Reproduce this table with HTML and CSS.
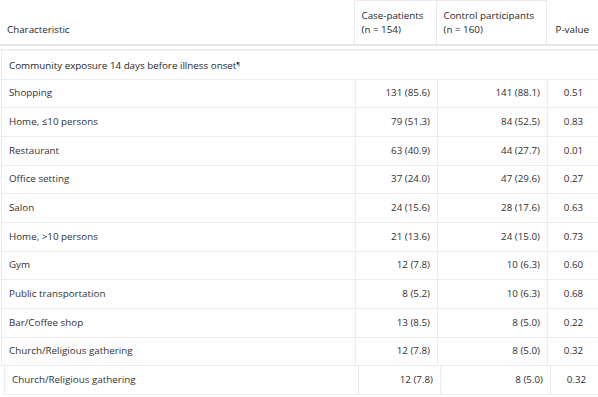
FILE: index.html
```html
<!DOCTYPE html>
<html>
<head>
<meta charset="utf-8">
<link rel="stylesheet" href="styles.css">
</head>
<body>
<div class="page">
  <table class="tbl head">
    <colgroup><col class="c1"><col class="c2"><col class="c3"><col class="c4"></colgroup>
    <tr>
      <th class="first">Characteristic</th>
      <th class="top">Case-patients<br>(n = 154)</th>
      <th class="top">Control participants<br>(n = 160)</th>
      <th class="pv">P-value</th>
    </tr>
  </table>
  <table class="tbl body">
    <colgroup><col class="c1"><col class="c2"><col class="c3"><col class="c4"></colgroup>
    <tr class="section"><td colspan="4">Community exposure 14 days before illness onset<sup>¶</sup></td></tr>
    <tr><td>Shopping</td><td class="num">131 (85.6)</td><td class="num">141 (88.1)</td><td class="p">0.51</td></tr>
    <tr><td>Home, ≤10 persons</td><td class="num">79 (51.3)</td><td class="num">84 (52.5)</td><td class="p">0.83</td></tr>
    <tr><td>Restaurant</td><td class="num">63 (40.9)</td><td class="num">44 (27.7)</td><td class="p">0.01</td></tr>
    <tr><td>Office setting</td><td class="num">37 (24.0)</td><td class="num">47 (29.6)</td><td class="p">0.27</td></tr>
    <tr><td>Salon</td><td class="num">24 (15.6)</td><td class="num">28 (17.6)</td><td class="p">0.63</td></tr>
    <tr><td>Home, &gt;10 persons</td><td class="num">21 (13.6)</td><td class="num">24 (15.0)</td><td class="p">0.73</td></tr>
    <tr><td>Gym</td><td class="num">12 (7.8)</td><td class="num">10 (6.3)</td><td class="p">0.60</td></tr>
    <tr><td>Public transportation</td><td class="num">8 (5.2)</td><td class="num">10 (6.3)</td><td class="p">0.68</td></tr>
    <tr><td>Bar/Coffee shop</td><td class="num">13 (8.5)</td><td class="num">8 (5.0)</td><td class="p">0.22</td></tr>
    <tr><td>Church/Religious gathering</td><td class="num">12 (7.8)</td><td class="num">8 (5.0)</td><td class="p">0.32</td></tr>
  </table>
  <table class="tbl body shifted">
    <colgroup><col class="c1"><col class="c2"><col class="c3"><col class="c4"></colgroup>
    <tr><td>Church/Religious gathering</td><td class="num">12 (7.8)</td><td class="num">8 (5.0)</td><td class="p">0.32</td></tr>
  </table>
</div>
</body>
</html>
```

FILE: styles.css
```css
html, body {
  margin: 0;
  padding: 0;
  background: #ffffff;
}
.page {
  font-family: "Open Sans", "Liberation Sans", sans-serif;
  font-size: 9.8px;
  color: #262626;
  width: 598px;
  overflow: hidden;
}
.tbl {
  border-collapse: collapse;
  table-layout: fixed;
  width: 598px;
}
.c1 { width: 354px; }
.c2 { width: 82px; }
.c3 { width: 110px; }
.c4 { width: 52px; }
.head th {
  font-weight: normal;
  text-align: left;
  vertical-align: bottom;
  height: 36px;
  padding: 0 7px 7px 7px;
  line-height: 14px;
  border-bottom: 2px solid #e3e5e8;
}
.head th.top {
  border-top: 1px solid #e8eaed;
  border-left: 1px solid #e8eaed;
  border-right: 1px solid #e8eaed;
}
.head th.pv {
  text-align: center;
  padding: 0 0 7px 0;
}
.body {
  margin-top: 3px;
  width: 595px;
  margin-left: 1px;
}
.body td {
  height: 27.67px;
  padding: 0 7px;
  border: 1px solid #eaecee;
  color: #303030;
  line-height: 14px;
  white-space: nowrap;
}
.body tr.section td {
  color: #1e1e1e;
  border-top-width: 2px;
  border-top-color: #eceef0;
}
.body sup {
  font-size: 6px;
  vertical-align: 3px;
}
.body td.num {
  text-align: right;
}
.body td.p {
  text-align: center;
  padding: 0;
}
.shifted {
  margin-top: -1px;
  margin-left: 4px;
}
```
